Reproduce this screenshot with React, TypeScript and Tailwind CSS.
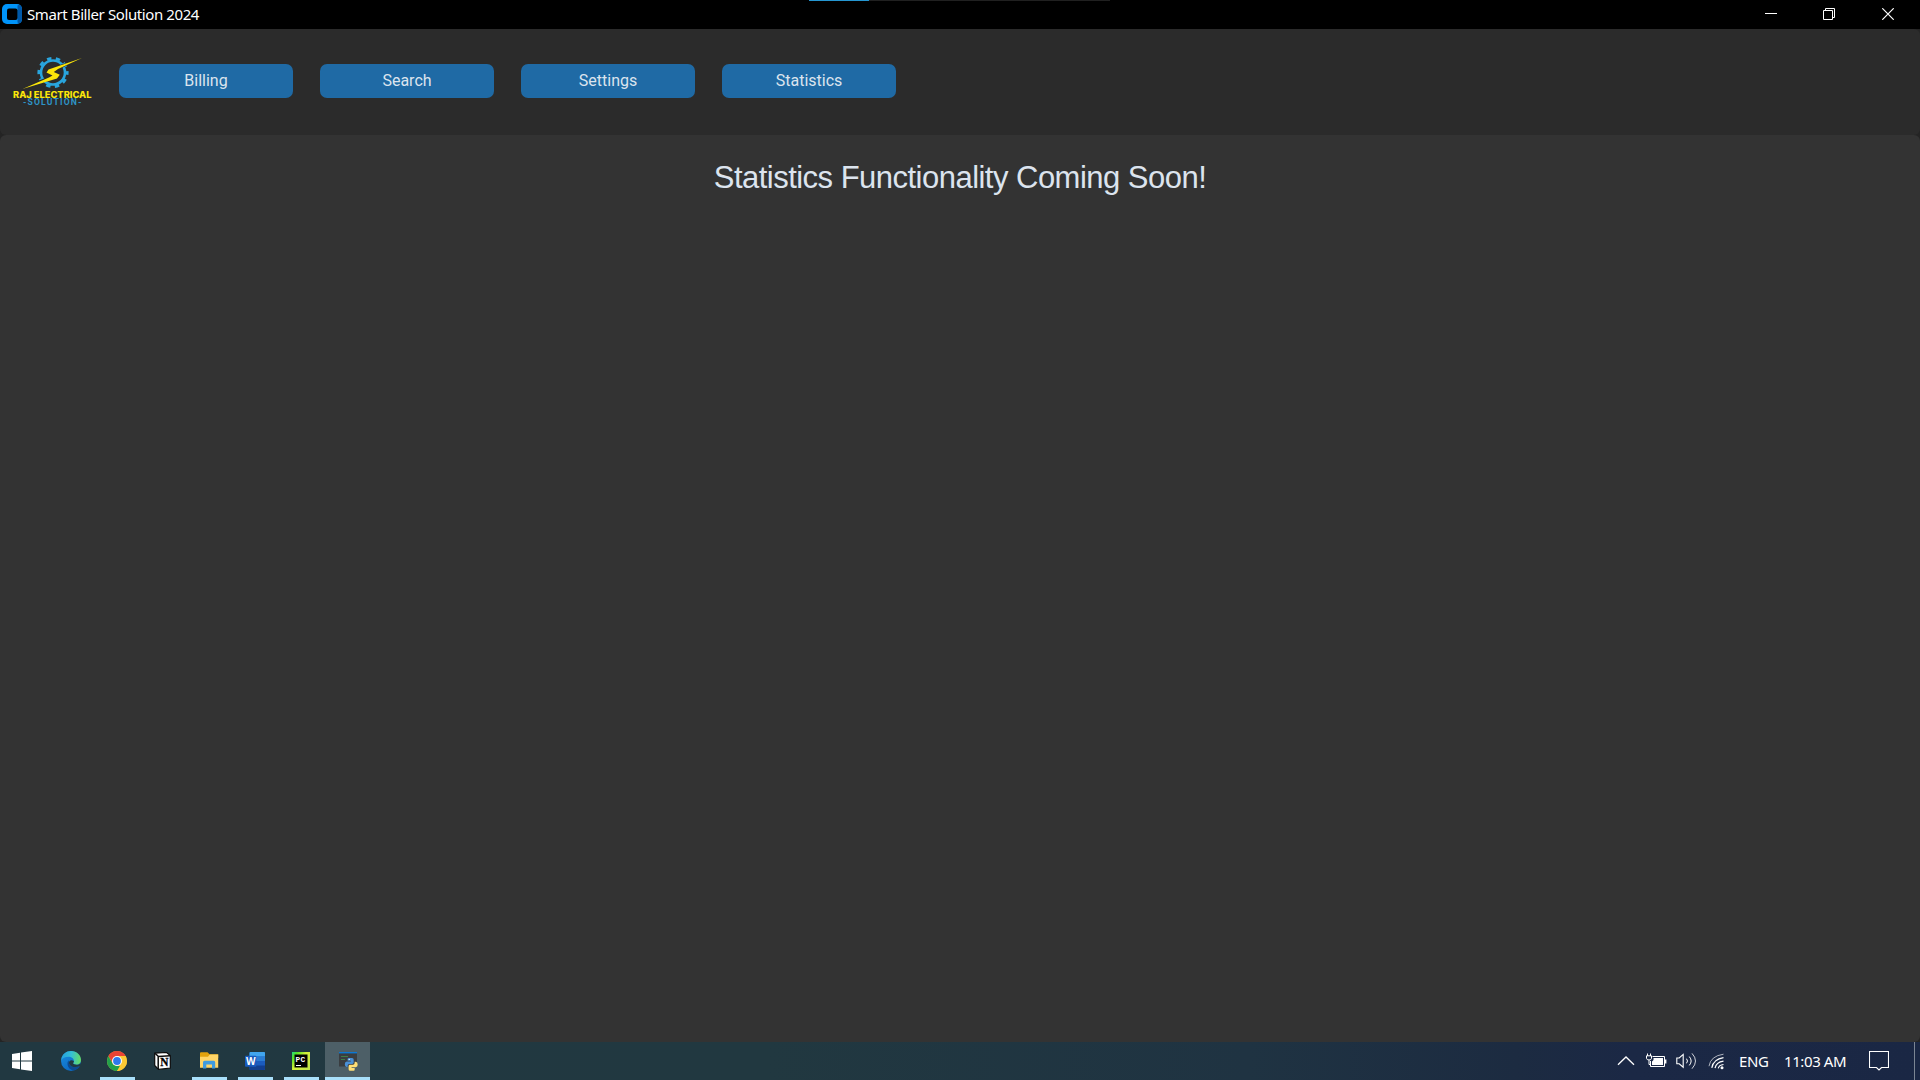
import React from "react";

const navItems = ["Billing", "Search", "Settings", "Statistics"];

function AppIcon() {
  return (
    <svg width="20" height="20" viewBox="0 0 20 20" className="mb-px">
      <rect width="20" height="20" rx="5" fill="#0094fa" />
      <path d="M15.5 1.5L17 0.8Q20 2 20 5V15Q20 19 17 19.3L15.5 18.5Z" fill="#0058a8" />
      <rect x="5" y="4.5" width="10.5" height="11.5" rx="2" fill="#000" />
    </svg>
  );
}

function Logo() {
  return (
    <svg width="84" height="56" viewBox="0 0 84 56">
      <circle cx="41" cy="17.5" r="12" fill="none" stroke="#29a5de" strokeWidth="2.6" />
      <circle cx="41" cy="17.5" r="14.2" fill="none" stroke="#29a5de" strokeWidth="2.8" strokeDasharray="4.4 4.522" strokeDashoffset="2" />
      <path d="M60 7L36 14.5L34 18L39.5 20.5L37 22.5L20 29L44 23.5L47.5 20L41.5 17.5L45 14.5Z" fill="#2b2b2b" stroke="#2b2b2b" strokeWidth="1.5" />
      <path d="M70 3L36.5 14.5L34.5 17.5L40.5 20.5L37 22.5L10.5 34L45 23.5L47.8 19.8L41.8 17L46 14Z" fill="#fbe60a" />
      <text x="1" y="42.5" fontFamily="Inter, sans-serif" fontWeight="800" fontSize="8.6" textLength="78.5" lengthAdjust="spacingAndGlyphs" fill="#fbe60a">RAJ ELECTRICAL</text>
      <text x="11" y="50" fontFamily="Roboto, sans-serif" fontWeight="700" fontSize="8.6" textLength="58.5" fill="#2e93c6">-SOLUTION-</text>
    </svg>
  );
}

function StartIcon() {
  return (
    <svg width="20" height="20" viewBox="0 0 20 20" fill="#fff">
      <path d="M0 3L8 1.7V9.4H0ZM9 1.5L20 0V9.4H9ZM0 10.4H8V18.2L0 17ZM9 10.4H20V20L9 18.4Z" />
    </svg>
  );
}

function EdgeIcon() {
  return (
    <svg width="20" height="20" viewBox="0 0 20 20">
      <defs>
        <linearGradient id="edgeTop" x1="0" x2="1" y1="0.4" y2="0.5">
          <stop offset="0" stopColor="#249fe0" />
          <stop offset="0.5" stopColor="#35bfd4" />
          <stop offset="1" stopColor="#65db63" />
        </linearGradient>
        <linearGradient id="edgeLow" x1="0" x2="0.6" y1="0" y2="1">
          <stop offset="0" stopColor="#1b8fe0" />
          <stop offset="1" stopColor="#0b67c2" />
        </linearGradient>
      </defs>
      <circle cx="10" cy="10" r="10" fill="url(#edgeLow)" />
      <path d="M0.3 8C1.2 3.2 5.2 0 10 0C15.8 0 20 4.3 20 9C20 12 18 13.7 15.5 13.7C13.4 13.7 12.1 13 12.1 12.3C12.1 11.8 12.9 11.5 12.9 10C12.9 7.4 10.6 5.8 7.5 5.8C4.1 5.8 1.2 7.2 0 10Z" fill="url(#edgeTop)" />
      <path d="M7.8 9.3C5.4 11.2 6 18.4 12.7 19.6C15.8 18.7 18 17 19 15C15 17 9 16.3 8 12.2Q7.6 10.5 7.8 9.3Z" fill="#0c4a92" />
      <path d="M8 12.2C8 9.5 10 8.4 12.9 10C12.9 11.5 12 11.8 12.1 12.3C12.2 13 13.4 13.7 15.5 13.7C17 13.7 18.5 13.2 19.3 12.2L20 14L19 15C15 17 9 16.3 8 12.2Z" fill="#213841" />
    </svg>
  );
}

function ChromeIcon() {
  return (
    <svg width="20" height="20" viewBox="0 0 20 20" className="mr-px">
      <circle cx="10" cy="10" r="10" fill="#fcc934" />
      <path d="M10 10L5.9 12.4L1.34 5A10 10 0 0 1 18.66 5H10Z" fill="#ea4335" />
      <path d="M1.34 5L5.67 12.5A5 5 0 0 0 10 15H14.33L10 20A10 10 0 0 1 1.34 5Z" fill="#22a04b" />
      <path d="M14.33 12.5L10 20A10 10 0 0 0 18.66 5H10Z" fill="#fcc934" />
      <circle cx="10" cy="10" r="5" fill="#fff" />
      <circle cx="10" cy="10" r="3.9" fill="#2e79ed" />
    </svg>
  );
}

function NotionIcon() {
  return (
    <svg width="17" height="18" viewBox="0 0 17 18" className="mr-[2px]">
      <path d="M0.7 1.2L12.5 0.5L16.3 3.5V16L4.5 17.4L0.7 13.5Z" fill="#fff" stroke="#0b0b0b" strokeWidth="1.2" />
      <path d="M1.2 1.5L4.5 4.6L16 3.8M4.2 4.6V17" stroke="#0b0b0b" strokeWidth="1.5" fill="none" />
      <text x="6.2" y="14" fontFamily="Liberation Serif, serif" fontWeight="700" fontSize="11.5" textLength="8.2" lengthAdjust="spacingAndGlyphs" fill="#000" stroke="#000" strokeWidth="0.3">N</text>
    </svg>
  );
}

function ExplorerIcon() {
  return (
    <svg width="20" height="18" viewBox="0 0 20 18">
      <path d="M0 1.2Q0 0.3 1 0.3H7.5L9.6 2.2H18.2V6H0Z" fill="#e2a20d" />
      <path d="M0 4.8H8L9.8 2.6H18.2V15.8H0Z" fill="#ffd567" />
      <path d="M3 16.5V10.4Q3 8.8 4.5 8.8H13.7Q15.2 8.8 15.2 10.4V16.5H12V12.6H6.3V16.5Z" fill="#3f9be0" />
    </svg>
  );
}

function WordIcon() {
  return (
    <svg width="20" height="18" viewBox="0 0 20 18" className="mr-px">
      <rect x="4.5" width="15.5" height="18" rx="1" fill="#1b5cbe" />
      <path d="M4.5 4.5V1Q4.5 0 5.5 0H19Q20 0 20 1V4.5Z" fill="#41a5ee" />
      <path d="M4.5 4.5H20V9H4.5Z" fill="#2b7cd3" />
      <path d="M4.5 13.5H20V17Q20 18 19 18H5.5Q4.5 18 4.5 17Z" fill="#123f8f" />
      <rect y="3.7" width="11.3" height="11" rx="0.8" fill="#185abd" />
      <text x="0.9" y="12.9" fontFamily="Open Sans, sans-serif" fontWeight="700" fontSize="10.4" textLength="9.6" lengthAdjust="spacingAndGlyphs" fill="#fff">W</text>
    </svg>
  );
}

function PyCharmIcon() {
  return (
    <svg width="18" height="18" viewBox="0 0 18 18" className="mr-px">
      <defs>
        <linearGradient id="pycharm" x1="0" x2="1" y1="0" y2="0.8">
          <stop offset="0" stopColor="#21d789" />
          <stop offset="0.2" stopColor="#56e226" />
          <stop offset="0.5" stopColor="#d5ef3a" />
          <stop offset="1" stopColor="#c4e74a" />
        </linearGradient>
      </defs>
      <rect width="18" height="18" fill="url(#pycharm)" />
      <rect x="2.5" y="2.5" width="13" height="13" fill="#000" />
      <text x="3.6" y="9.8" fontFamily="Liberation Mono, monospace" fontWeight="700" fontSize="7.8" textLength="9.6" fill="#fff">PC</text>
      <path d="M4 13.5H9" stroke="#fff" strokeWidth="1" />
    </svg>
  );
}

function PythonWindowIcon() {
  return (
    <svg width="20" height="19" viewBox="0 0 20 19" className="ml-[2px] mt-px">
      <rect width="18" height="14.5" fill="#3a3d40" />
      <rect width="18" height="1.4" fill="#0c78d4" />
      <path d="M2 4.5H9M2 7.5H6" stroke="#3f7d48" strokeWidth="1" />
      <path d="M9.8 6H13Q14.7 6 14.7 7.7V10.6Q14.7 12 13.2 12H10.3Q8.6 12 8.6 13.8V14.9H7.6Q5.8 14.6 5.8 12.2T7.8 9.6H11.8V8.8H8.6V7.3Q8.6 6 9.8 6Z" fill="#4a90d6" />
      <path d="M14.7 18.8H11.2Q9.6 18.8 9.6 17.2V14.2Q9.6 12.8 11 12.8H14Q15.6 12.8 15.6 11V9.8H16.6Q18.7 10 18.7 12.6T16.7 15.2H12.6V16H15.7V17.4Q15.7 18.8 14.7 18.8Z" fill="#ffdf76" />
      <circle cx="10.2" cy="7.4" r="0.6" fill="#fff" />
    </svg>
  );
}

const tasks = [
  { name: "start", icon: <StartIcon />, cell: "w-[44px]", bar: "" },
  { name: "edge", icon: <EdgeIcon />, cell: "w-[54px]", bar: "" },
  { name: "chrome", icon: <ChromeIcon />, cell: "w-[39px]", bar: "w-[35px]" },
  { name: "notion", icon: <NotionIcon />, cell: "w-[53px]", bar: "" },
  { name: "explorer", icon: <ExplorerIcon />, cell: "w-[39px]", bar: "w-[35px]" },
  { name: "word", icon: <WordIcon />, cell: "w-[53px]", bar: "w-[35px]" },
  { name: "pycharm", icon: <PyCharmIcon />, cell: "w-[39px]", bar: "w-[35px]" },
];

function TrayIcons() {
  return (
    <>
      <svg width="18" height="10" viewBox="0 0 18 10">
        <path d="M1 8.8L9 1L17 8.8" fill="none" stroke="#fff" strokeWidth="1.3" />
      </svg>
      <svg width="21" height="16" viewBox="0 0 21 16" className="ml-[11px]">
        <path d="M6.5 3.5H18.5V13.5H4.5V8" fill="none" stroke="#fff" />
        <path d="M7.5 5H17V12H6V8.5L7.5 7Z" fill="#fff" />
        <rect x="19" y="6.5" width="1.4" height="4" fill="#fff" />
        <path d="M0.5 2.8H5.5V5.3Q5.2 7 3 7T0.5 5.3Z" fill="none" stroke="#fff" />
        <path d="M1.5 0.5V3M4.5 0.5V3M3 7V11.5H4.5" stroke="#fff" fill="none" />
      </svg>
      <svg width="21" height="18" viewBox="0 0 21 18" className="ml-[9px]" fill="none" stroke="#fff">
        <path d="M0.8 6H3.2L7.2 2.4V15.2L3.2 11.8H0.8Z" strokeWidth="1.1" />
        <path d="M10.5 6.7Q12.5 9 10.5 11.3M13.3 4.6Q17 9 13.3 13.4" strokeWidth="1" />
        <path d="M16 1.4Q23 9 16 16.7" strokeWidth="1" opacity="0.8" />
      </svg>
      <svg width="17" height="17" viewBox="0 0 17 17" className="ml-[11px] mt-px" fill="none" stroke="#fff">
        <path d="M1 13.2Q2.5 3 15.5 1.2" opacity="0.65" />
        <path d="M3.8 14.8Q5.5 6.2 15.5 4.7" strokeWidth="1.2" />
        <path d="M7 15.2Q8.2 9.2 15.5 8.2" strokeWidth="1.2" />
        <path d="M10.2 15.4Q11 12 15.5 11.5" strokeWidth="1.1" />
        <circle cx="14" cy="14.8" r="1.5" fill="#fff" stroke="none" />
      </svg>
    </>
  );
}

export default function App() {
  return (
    <div className="flex h-[1080px] w-[1920px] flex-col overflow-hidden bg-[#242424]">
      <div className="relative flex h-[29px] shrink-0 items-center bg-black pl-[2px]">
        <AppIcon />
        <span className="mb-px ml-[5px] whitespace-nowrap font-['Noto_Sans',sans-serif] text-[15px] leading-5 tracking-[-0.4px] text-white">
          Smart Biller Solution 2024
        </span>
        <div className="absolute left-[809px] top-0 flex h-px w-[301px] bg-[#202020]">
          <div className="w-[60px] bg-[#2596d1]" />
        </div>
        <div className="ml-auto flex items-center pb-px pr-[26px]">
          <svg width="12" height="12" viewBox="0 0 12 12" className="mr-[46px]">
            <path d="M0 5.5H12" stroke="#fff" />
          </svg>
          <svg width="12" height="12" viewBox="0 0 12 12" className="mr-[47px]" fill="none" stroke="#fff">
            <path d="M0.5 2.5H9.5V11.5H0.5ZM2.5 2.5V0.5H11.5V9.5H9.5" />
          </svg>
          <svg width="12" height="12" viewBox="0 0 12 12" fill="none" stroke="#fff">
            <path d="M0.3 0.3L11.7 11.7M11.7 0.3L0.3 11.7" strokeWidth="1.2" />
          </svg>
        </div>
      </div>

      <header className="flex h-[106px] shrink-0 rounded-[6px] bg-[#2b2b2b] pl-[12px]">
        <div className="mt-[26px] w-[107px]">
          <Logo />
        </div>
        <nav className="mt-[35px] flex gap-[27px]">
          {navItems.map((label) => (
            <button
              key={label}
              className="flex h-[34px] w-[174px] items-center justify-center rounded-[7px] bg-[#1f6aa5] font-[Roboto,sans-serif] text-[16px] leading-5 text-[#dce4ee]"
            >
              {label}
            </button>
          ))}
        </nav>
      </header>

      <main className="flex flex-1 justify-center rounded-[6px] bg-[#333333]">
        <h1 className="mt-[25px] whitespace-nowrap font-['Liberation_Sans',sans-serif] text-[31px] leading-[36px] tracking-[-0.52px] text-[#dce4ee]">
          Statistics Functionality Coming Soon!
        </h1>
      </main>

      <footer className="flex h-[38px] shrink-0 bg-[linear-gradient(90deg,#213841_0%,#213840_40%,#1f3342_65%,#1c2b41_79%,#1b2845_85%,#1a2744_100%)]">
        {tasks.map((t) => (
          <div key={t.name} className={`relative flex items-center justify-center ${t.cell}`}>
            {t.icon}
            {t.bar && <div className={`absolute bottom-0 h-[3px] bg-[#a9e0fb] ${t.bar}`} />}
          </div>
        ))}
        <div className="relative ml-[4px] flex w-[45px] items-center justify-center bg-[#4d5f67]">
          <PythonWindowIcon />
          <div className="absolute bottom-0 h-[3px] w-full bg-[#a9e0fb]" />
        </div>
        <div className="ml-auto flex items-center font-['Noto_Sans',sans-serif] text-[15px] text-white">
          <TrayIcons />
          <span className="ml-[14px] w-[45px] whitespace-nowrap tracking-[-0.4px]">ENG</span>
          <span className="w-[85px] whitespace-nowrap tracking-[-0.4px]">11:03 AM</span>
          <svg width="20" height="20" viewBox="0 0 20 20" fill="none" stroke="#fff" className="mr-[25px]">
            <path d="M0.5 0.5H19.5V16.5H12.5L10 19L7.5 16.5H0.5Z" strokeWidth="1.1" />
          </svg>
          <div className="mr-[5px] h-full w-px bg-[#7b8593]" />
        </div>
      </footer>
    </div>
  );
}
